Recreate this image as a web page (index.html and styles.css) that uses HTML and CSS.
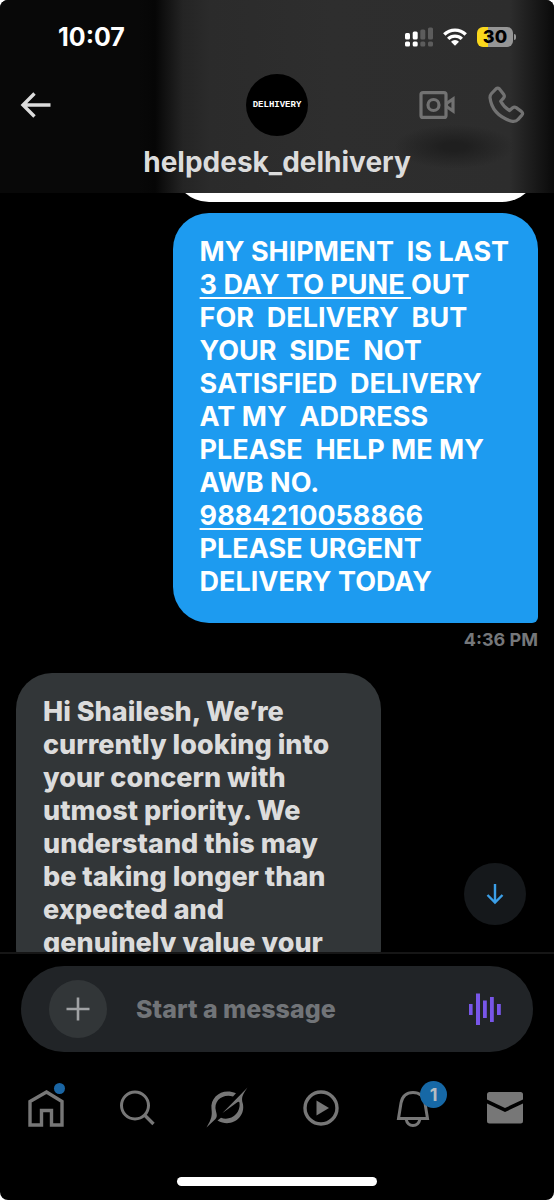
FILE: index.html
```html
<!DOCTYPE html>
<html lang="en">
<head>
<meta charset="utf-8">
<meta name="viewport" content="width=device-width, initial-scale=1">
<title>helpdesk_delhivery</title>
<link rel="stylesheet" href="styles.css">
</head>
<body>
<div class="app">
  <header class="header">
    <div class="status">
      <time class="clock">10:07</time>
      <div class="status-icons">
        <svg class="signal" viewBox="0 0 28 20" width="28" height="20" aria-hidden="true">
          <g fill="#fff"><rect x="0" y="6" width="5" height="6.500" rx="1.500"/><rect x="7.700" y="4.500" width="5" height="8" rx="1.500"/><rect x="0" y="14.500" width="5" height="5" rx="1.500"/><rect x="7.700" y="14.500" width="5" height="5" rx="1.500"/></g>
          <g fill="#5c5c5c"><rect x="15.300" y="2.500" width="5" height="10" rx="1.500"/><rect x="23" y="0.500" width="5" height="12" rx="1.500"/><rect x="15.300" y="14.500" width="5" height="5" rx="1.500"/><rect x="23" y="14.500" width="5" height="5" rx="1.500"/></g>
        </svg>
        <svg class="wifi" viewBox="0 0 24 18" width="24" height="18" aria-hidden="true">
          <g fill="none" stroke="#fff" stroke-width="3.400"><path d="M1.300 6.500a15.200 15.200 0 0 1 21.400 0"/><path d="M5.200 10.900a9.700 9.700 0 0 1 13.600 0"/></g>
          <path fill="#fff" d="M8 13.700a5.700 5.700 0 0 1 8 0L12 17.800z"/>
        </svg>
        <div class="battery"><span>30</span></div>
      </div>
    </div>
    <div class="toolbar">
      <button class="icon-btn back" aria-label="Back">
        <svg viewBox="0 0 30 26" width="30" height="26"><path d="M29.500 13H2M13.500 1.500L2 13l11.500 11.500" fill="none" stroke="#dcdcdc" stroke-width="3.400"/></svg>
      </button>
      <div class="avatar">DELHIVERY</div>
      <div class="calls">
        <button class="icon-btn" aria-label="Video call">
          <svg viewBox="0 0 36 28" width="36" height="28"><g fill="none" stroke="#727272" stroke-width="3.200"><rect x="2" y="1.600" width="25" height="24.800" rx="2"/><circle cx="14.500" cy="14" r="5.500"/><path d="M27.500 12.500L34 8v12l-6.500-4.500z"/></g></svg>
        </button>
        <button class="icon-btn" aria-label="Audio call">
          <svg viewBox="0 0 36 38" width="36" height="38"><path d="M3.500 7.500L8 2.800q1.800-1.500 3.500.2l4.300 5.500q1.200 1.900-.3 3.600l-2.800 3.200q3.200 6 8.800 9.200l3.200-2.800q1.700-1.300 3.500-.1l5.400 4q1.800 1.600.3 3.500l-4 4.500Q28 36 23.500 35.200 4 29 2 11.500q0-2.300 1.500-4z" fill="none" stroke="#727272" stroke-width="3.200" stroke-linejoin="round"/></svg>
        </button>
      </div>
    </div>
    <h1 class="name">helpdesk_delhivery</h1>
  </header>

  <main class="chat">
    <div class="messages">
      <div class="bubble previous"></div>
      <div class="bubble sent">MY SHIPMENT  IS LAST
<a href="#date">3 DAY TO PUNE </a>OUT
FOR  DELIVERY  BUT
YOUR  SIDE  NOT
SATISFIED  DELIVERY
AT MY  ADDRESS
PLEASE  HELP ME MY
AWB NO.
<a href="#awb">9884210058866</a>
PLEASE URGENT
DELIVERY TODAY</div>
      <time class="stamp">4:36 PM</time>
      <div class="bubble received">Hi Shailesh, We’re
currently looking into
your concern with
utmost priority. We
understand this may
be taking longer than
expected and
genuinely value your</div>
    </div>
    <button class="scroll-down" aria-label="Scroll to latest">
      <svg viewBox="0 0 20 22" width="20" height="22"><path d="M10 1v18M2.500 12L10 19.500 17.500 12" fill="none" stroke="#3b9fe8" stroke-width="2.400"/></svg>
    </button>
  </main>

  <form class="composer">
    <div class="composer-pill">
      <button type="button" class="add" aria-label="Add attachment">
        <svg viewBox="0 0 24 24" width="24" height="24"><path d="M12 0.500v23M0.500 12h23" stroke="#a0a2a4" stroke-width="2.600"/></svg>
      </button>
      <input class="message-input" type="text" placeholder="Start a message" aria-label="Start a message">
      <button type="button" class="icon-btn" aria-label="Voice message">
        <svg viewBox="0 0 32 32" width="32" height="32"><g fill="#7856e8"><rect x="0" y="11" width="3.600" height="11"/><rect x="7" y="0.500" width="4" height="31.500"/><rect x="14" y="7.500" width="3.800" height="17.500"/><rect x="21" y="4" width="3.800" height="25"/><rect x="28" y="11" width="3.800" height="11"/></g></svg>
      </button>
    </div>
  </form>

  <nav class="tabs" aria-label="Main">
    <a href="#home" aria-label="Home"><svg viewBox="0 0 36 38" width="36" height="38"><path d="M2 36V12.500L18.500 3 34 12.500V36H23.500V21.500h-10V36z" fill="none" stroke="#777" stroke-width="3.400"/></svg><span class="dot"></span></a>
    <a href="#search" aria-label="Search"><svg viewBox="0 0 36 36" width="36" height="36"><circle cx="15" cy="15.500" r="13.500" fill="none" stroke="#777" stroke-width="3"/><path d="M24 24.500l9.500 9.500" stroke="#777" stroke-width="3.400"/></svg></a>
    <a class="wide" href="#grok" aria-label="Grok"><svg viewBox="0 0 44 46" width="44" height="46"><g fill="#777"><path d="M28 8.300C15 2.500 2 11.500 3.500 24c.7 6 .5 9.500-5 18.500L7.500 34c2-2.500 1.300-4.500.5-7.500C5 15.500 15 8.500 25 11.500z"/><path d="M39.500 2.500C34.500 10 33 12.500 34.800 18.500 38 32 23.500 43.500 9.500 35.500l3.500-2.700c9.500 3.700 20-4.300 18.500-15-.3-1.500-1.300-1.500-2.500-.3L14.500 28z"/></g></svg></a>
    <a href="#video" aria-label="Video"><svg viewBox="0 0 36 36" width="36" height="36"><circle cx="18" cy="18" r="16" fill="none" stroke="#777" stroke-width="3.400"/><path d="M13.500 10.500v15L26 18z" fill="#777"/></svg></a>
    <a href="#notifications" aria-label="Notifications"><svg viewBox="0 0 36 38" width="36" height="38"><path d="M3.500 29.500L6 14C7.500 6.500 12 3.500 18 3.500S28.500 6.500 30 14l2.500 15.500zM11 30q1.500 6.500 7 6.500t7-6.500" fill="none" stroke="#777" stroke-width="3"/></svg><span class="badge">1</span></a>
    <a href="#messages" aria-label="Messages"><svg viewBox="0 0 36 34" width="36" height="34"><g fill="#777"><path d="M0 8.500V3.500Q0 1 2.500 1h31Q36 1 36 3.500V8.500L18 17z"/><path d="M0 12.500L18 21l18-8.500V30q0 2.500-2.500 2.500h-31Q0 32.500 0 30z"/></g></svg></a>
  </nav>
  <div class="home-indicator"></div>
</div>
</body>
</html>
```

FILE: styles.css
```css
* { box-sizing: border-box; }

body {
  margin: 0;
  background: #fff;
  font-family: Inter, "Noto Sans", sans-serif;
  font-weight: 700;
}

button {
  border: 0;
  padding: 0;
  background: none;
  font: inherit;
  color: inherit;
  cursor: pointer;
}

svg {
  display: block;
  overflow: visible;
}

.app {
  display: flex;
  flex-direction: column;
  height: 100vh;
  overflow: hidden;
  border-radius: 8px;
  background: #000;
  color: #dcdcdc;
}

/* Header */
.header {
  flex: none;
  padding-bottom: 13px;
  background:
    radial-gradient(ellipse 60px 22px at 82% 76%, #1f1f1f 20%, transparent 100%),
    linear-gradient(90deg, #080808 0, #080808 25%, #060606 28%, #242424 33%, #2b2b2b 38%, #2e2e2e 60%, #2d2d2d 92%, #0a0a0a 100%);
}

.status {
  display: flex;
  align-items: center;
  justify-content: space-between;
  height: 74px;
  padding: 0 41px 0 58px;
}

.clock {
  font-size: 25px;
  line-height: 32px;
  color: #fff;
}

.status-icons {
  display: flex;
  align-items: center;
  gap: 10px;
}

.battery {
  position: relative;
  width: 36px;
  height: 20px;
  border-radius: 6px;
  background: linear-gradient(90deg, #f9d71c 30%, #969696 30%);
  color: #000;
  font-size: 18px;
  font-weight: 800;
  line-height: 20px;
  text-align: center;
}

.battery::after {
  content: "";
  position: absolute;
  left: 100%;
  top: 7px;
  width: 2px;
  height: 6px;
  margin-left: 1px;
  border-radius: 0 2px 2px 0;
  background: #969696;
}

.toolbar {
  display: grid;
  grid-template-columns: 1fr auto 1fr;
  align-items: center;
  padding: 0 30px;
}

.avatar {
  display: grid;
  place-items: center;
  width: 62px;
  height: 62px;
  border-radius: 50%;
  background: #000;
  color: #fff;
  font-family: "Liberation Mono", monospace;
  font-size: 9px;
}

.back {
  justify-self: start;
  margin-left: -9px;
}

.calls {
  display: flex;
  align-items: center;
  justify-content: flex-end;
  gap: 33px;
}

.name {
  margin: 8px 0 0;
  font-size: 28px;
  line-height: 36px;
  text-align: center;
}

/* Conversation */
.chat {
  position: relative;
  flex: 1;
  min-height: 0;
}

.messages {
  display: flex;
  flex-direction: column;
  height: 100%;
  overflow: hidden;
  padding: 0 16px;
}

.bubble {
  flex: none;
  width: 70%;
  border-radius: 36px;
  padding: 22px 0 25px 27px;
  font-size: 27px;
  line-height: 33px;
  white-space: pre;
}

.bubble a {
  color: inherit;
  text-decoration: underline;
  text-decoration-thickness: 2px;
  text-underline-offset: 3px;
}

.previous {
  align-self: flex-end;
  height: 80px;
  margin-top: -71px;
  background: #fff;
}

.sent {
  align-self: flex-end;
  margin-top: 11px;
  border-bottom-right-radius: 6px;
  background: #1d9bf0;
  color: #fff;
}

.stamp {
  align-self: flex-end;
  margin: 5px 0 21px;
  color: #75777a;
  font-size: 18px;
  line-height: 24px;
}

.received {
  background: #323638;
  font-weight: 800;
}

.scroll-down {
  position: absolute;
  right: 28px;
  bottom: 27px;
  display: grid;
  place-items: center;
  width: 62px;
  height: 62px;
  border-radius: 50%;
  background: #15181b;
}

/* Composer */
.composer {
  flex: none;
  border-top: 2px solid #161616;
  padding: 12px 21px 14px;
}

.composer-pill {
  display: flex;
  align-items: center;
  height: 86px;
  padding: 0 32px 0 28px;
  border-radius: 43px;
  background: #212427;
}

.add {
  display: grid;
  place-items: center;
  flex: none;
  width: 58px;
  height: 58px;
  border-radius: 50%;
  background: #323638;
}

.message-input {
  flex: 1;
  min-width: 0;
  margin: 0 16px 0 29px;
  border: 0;
  padding: 0;
  background: none;
  color: #dcdcdc;
  font: inherit;
  font-size: 25px;
  font-weight: 800;
  outline: 0;
}

.message-input::placeholder {
  color: #717478;
  opacity: 1;
}

/* Bottom tabs */
.tabs {
  flex: none;
  display: flex;
  align-items: center;
  justify-content: space-between;
  height: 84px;
  padding: 0 31px 0 28px;
}

.tabs a {
  position: relative;
  display: grid;
  place-items: center;
  width: 36px;
  color: inherit;
  text-decoration: none;
}

.tabs .wide {
  width: 44px;
  margin: 0 -4px;
}

.dot {
  position: absolute;
  top: -6px;
  right: -1px;
  width: 11px;
  height: 11px;
  border-radius: 50%;
  background: #1a65a3;
}

.badge {
  position: absolute;
  top: -8px;
  right: -16px;
  width: 27px;
  height: 27px;
  border-radius: 50%;
  background: #1668a6;
  color: #b4bcc2;
  font-size: 18px;
  line-height: 27px;
  text-align: center;
}

.home-indicator {
  flex: none;
  align-self: center;
  width: 36%;
  height: 9px;
  margin: 27px 0 14px;
  border-radius: 5px;
  background: #fff;
}
```
